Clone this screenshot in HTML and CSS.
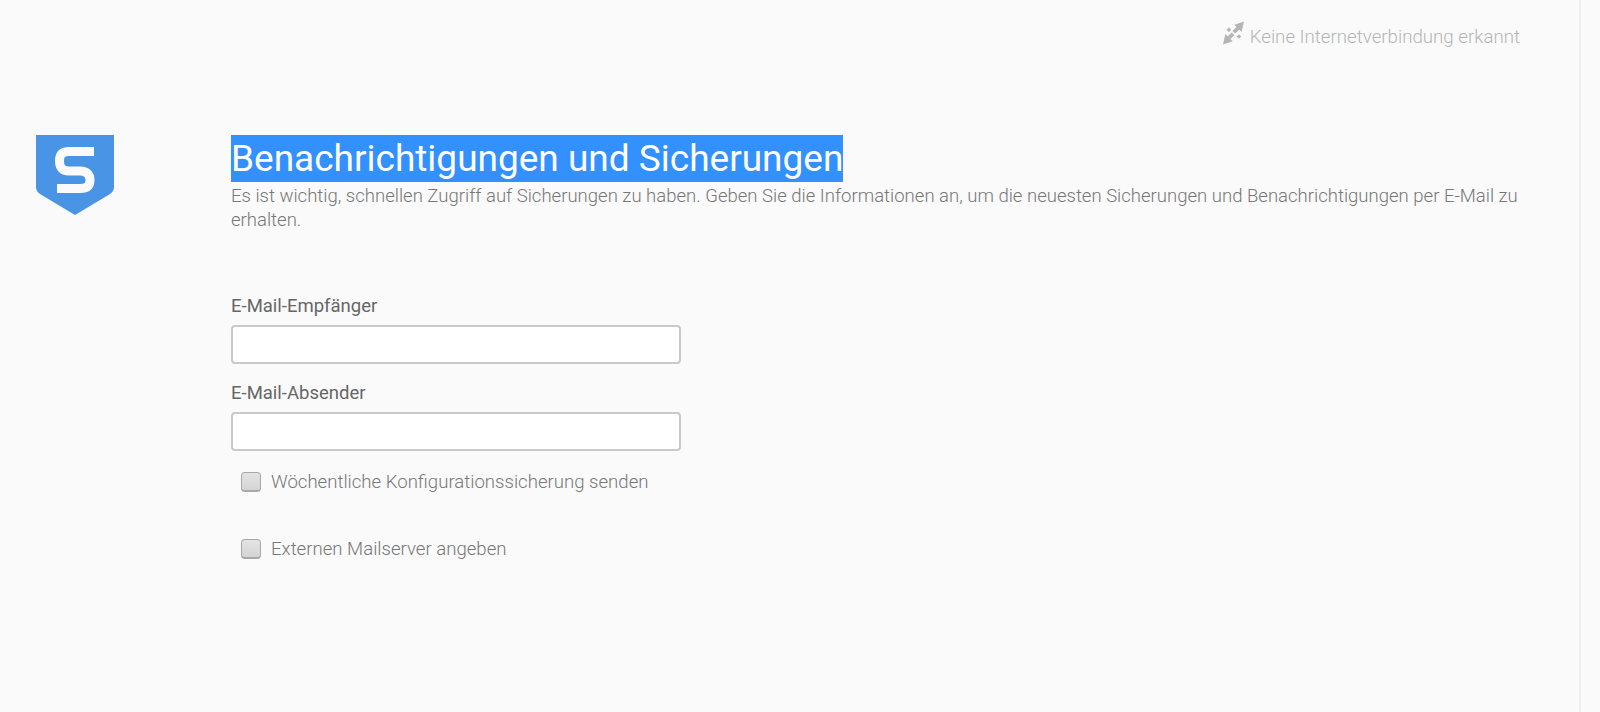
FILE: index.html
```html
<!DOCTYPE html>
<html lang="de">
  <head>
    <meta charset="UTF-8" />
    <meta name="viewport" content="width=device-width, initial-scale=1.0" />
    <link rel="stylesheet" href="styles.css">
    <title>Benachrichtigungen und Sicherungen</title>
  </head>

  <body>
    <div class="page">
      <div class="statusBar">
        <svg class="statusIcon" width="21" height="24" viewBox="0 0 22 24">
          <path d="M22 0 L19.5 11 L17 8.6 L12.6 12.6 L9.8 9.8 L14.2 5.8 L12 3.4 Z" fill="#b5b5b5" />
          <path d="M0 24 L2.4 13 L5 15.4 L9.2 11.6 L12 14.4 L7.8 18.2 L10.2 20.6 Z" fill="#b5b5b5" />
          <rect x="4.5" y="7" width="3.4" height="3.4" transform="rotate(45 6.2 8.7)" fill="#b5b5b5" />
          <rect x="15" y="14" width="3.4" height="3.4" transform="rotate(45 16.7 15.7)" fill="#b5b5b5" />
        </svg>
        <span class="statusText">Keine Internetverbindung erkannt</span>
      </div>

      <div class="mainSection">
        <div class="logoColumn">
          <svg class="logo" width="78" height="80" viewBox="0 0 78 80">
            <path d="M0 0 H78 V52 Q78 56 74 59 L39 80 L4 59 Q0 56 0 52 Z" fill="#4a94e6" />
            <path d="M58 16.5 H33 C26 16.5 23.5 20 23.5 26 C23.5 32 26 36 33 36 H44 C51 36 54 39.5 54 45 C54 50.5 51 53.5 44 53.5 H21" fill="none" stroke="#fafafa" stroke-width="9" />
          </svg>
        </div>

        <div class="content">
          <h1 class="title"><span class="titleSelected">Benachrichtigungen und Sicherungen</span></h1>
          <p class="description">Es ist wichtig, schnellen Zugriff auf Sicherungen zu haben. Geben Sie die Informationen an, um die neuesten Sicherungen und Benachrichtigungen per E-Mail zu erhalten.</p>

          <form class="settingsForm">
            <label class="fieldLabel" for="recipient">E-Mail-Empfänger</label>
            <input class="fieldInput" type="text" id="recipient" />
            <label class="fieldLabel" for="sender">E-Mail-Absender</label>
            <input class="fieldInput" type="text" id="sender" />

            <label class="checkRow">
              <span class="checkBox"></span>
              Wöchentliche Konfigurationssicherung senden
            </label>
            <label class="checkRow">
              <span class="checkBox"></span>
              Externen Mailserver angeben
            </label>
          </form>
        </div>
      </div>
    </div>
  </body>
</html>
```

FILE: styles.css
```css
body {
  background-color: #fafafa;
  font-family: Roboto, "Liberation Sans", sans-serif;
  margin: 0px;
}
.page {
  box-sizing: border-box;
  width: 1581px;
  height: 712px;
  border-right: 2px solid #f0f0f0;
  overflow: hidden;
}
.statusBar {
  display: flex;
  justify-content: flex-end;
  align-items: center;
  gap: 6px;
  height: 24px;
  padding: 21px 59px 0px 0px;
}
.statusText {
  font-size: 18.7px;
  font-weight: 300;
  color: #b5b5b5;
  padding-top: 7px;
}
.mainSection {
  display: flex;
  padding-top: 90px;
}
.logoColumn {
  width: 231px;
  padding-left: 36px;
  box-sizing: border-box;
  flex-shrink: 0;
}
.logo {
  display: block;
}
.content {
  width: 1290px;
}
.title {
  margin: 0px;
  font-size: 37px;
  line-height: 47px;
  font-weight: 400;
}
.titleSelected {
  display: inline-block;
  background-color: #3390ff;
  color: #ffffff;
}
.description {
  margin: 3px 0px 0px;
  font-size: 18.55px;
  line-height: 23.5px;
  font-weight: 300;
  color: #777777;
}
.settingsForm {
  display: flex;
  flex-direction: column;
  align-items: flex-start;
  margin-top: 63px;
}
.fieldLabel {
  font-size: 18.5px;
  line-height: 22px;
  color: #666666;
}
.fieldInput {
  box-sizing: border-box;
  width: 450px;
  height: 39px;
  margin: 7.5px 0px 18.5px;
  background-color: #ffffff;
  border: 2px solid #c9c9c9;
  border-radius: 4px;
}
.checkRow {
  display: flex;
  align-items: center;
  gap: 10px;
  margin: 2px 0px 43px 10px;
  font-size: 18.6px;
  line-height: 22px;
  font-weight: 300;
  color: #777777;
}
.checkBox {
  box-sizing: border-box;
  width: 20px;
  height: 20px;
  background: linear-gradient(#e4e4e4, #d4d4d4);
  border: 1px solid #a8a8a8;
  border-bottom-width: 2px;
  border-radius: 4px;
}
```
